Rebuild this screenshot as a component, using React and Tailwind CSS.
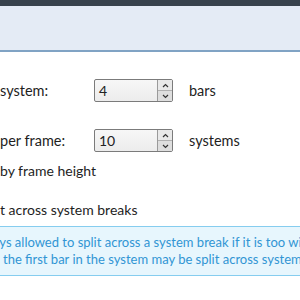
import React from 'react';

// hidden start of a label that runs off the left edge of the window
function Clipped({ children }) {
  return (
    <span className="inline-flex w-0 justify-end overflow-hidden whitespace-nowrap">{children}</span>
  );
}

function SpinBox({ value }) {
  return (
    <div className="flex h-[23px] w-[79px] border border-[#7b7b7b] bg-gradient-to-b from-[#f7f7f7] to-[#ececec] rounded-[2px]">
      <div className="flex flex-1 items-center pl-[4px] text-[14px] text-[#222]">{value}</div>
      <div className="flex w-[15px] flex-col border-l border-[#9a9a9a]">
        <div className="flex flex-1 items-center justify-center border-b border-[#b0b0b0] bg-[#e9e9e9]">
          <svg width="7" height="5" viewBox="0 0 7 5">
            <path d="M1 4 L3.5 1.5 L6 4" fill="none" stroke="#333" strokeWidth="1.2" />
          </svg>
        </div>
        <div className="flex flex-1 items-center justify-center bg-[#dedede]">
          <svg width="7" height="5" viewBox="0 0 7 5">
            <path d="M1 1 L3.5 3.5 L6 1" fill="none" stroke="#333" strokeWidth="1.2" />
          </svg>
        </div>
      </div>
    </div>
  );
}

export default function App() {
  return (
    <div className="h-[300px] w-[300px] overflow-hidden bg-white font-['Lato',sans-serif] text-[#1e1e1e]">
      <div className="h-[6px] bg-[#38424c]" />
      <div className="h-[46px] border-b-2 border-[#80a3c4] bg-[#e4ebf5]" />

      <div className="flex flex-col pt-[27px]">
        <div className="flex h-[23px] items-center text-[14.5px]">
          <div className="w-[94px] whitespace-nowrap">
            <Clipped>Fixed number of bars per </Clipped>system:
          </div>
          <SpinBox value="4" />
          <span className="ml-[16px]">bars</span>
        </div>

        <div className="mt-[27px] flex h-[23px] items-center text-[14.5px]">
          <div className="w-[94px] whitespace-nowrap">
            <Clipped>Fixed number of systems </Clipped>per frame:
          </div>
          <SpinBox value="10" />
          <span className="ml-[16px]">systems</span>
        </div>

        <div className="mt-[10px] whitespace-nowrap text-[14px] leading-[18px]">
          <Clipped>Also constrain </Clipped>by frame height
        </div>

        <div className="mt-[21px] whitespace-nowrap text-[14px] leading-[18px]">
          <Clipped>Allow bars to spli</Clipped>t across system breaks
        </div>

        <div className="-ml-[8px] mt-[7px] w-[320px] border border-[#86cdef] bg-[#e7f6fd] py-[7px] text-[13px] leading-[17px] text-[#3195d4]">
          <div className="whitespace-nowrap">
            <Clipped>A bar is alw</Clipped>ays allowed to split across a system break if it is too wide to fit
          </div>
          <div className="whitespace-nowrap pl-[10px]">
            <Clipped>otherwise, only</Clipped>the first bar in the system may be split across system breaks
          </div>
        </div>
      </div>
    </div>
  );
}
